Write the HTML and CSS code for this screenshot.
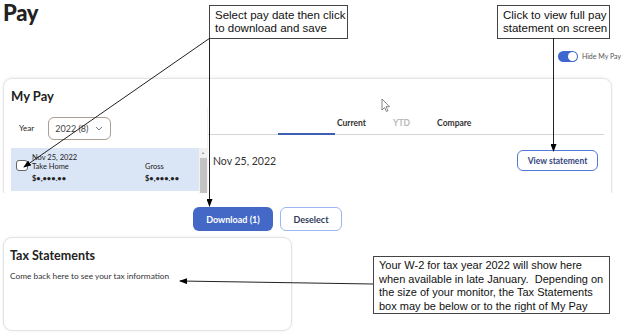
FILE: index.html
```html
<!DOCTYPE html>
<html lang="en">
<head>
  <meta charset="UTF-8">
  <meta name="viewport" content="width=device-width, initial-scale=1.0">
  <title>Pay</title>
  <link rel="stylesheet" href="styles.css">
</head>
<body>
  <div class="page">
    <h1 class="page-title">Pay</h1>

    <div class="toggle-row">
      <span class="toggle"><span class="knob"></span></span>
      <span class="toggle-label">Hide My Pay</span>
    </div>

    <div class="card mypay">
      <h2 class="card-title">My Pay</h2>
      <div class="mypay-body">
        <div class="left-col">
          <div class="year-row">
            <span class="year-label">Year</span>
            <div class="select">
              <span>2022 (8)</span>
              <svg width="8" height="5" viewBox="0 0 8 5"><path d="M1 1l3 3 3-3" fill="none" stroke="#777" stroke-width="1"/></svg>
            </div>
          </div>
          <div class="list">
            <div class="pay-item">
              <span class="checkbox"></span>
              <div class="pay-info">
                <div class="pay-date">Nov 25, 2022</div>
                <div class="pay-grid">
                  <span>Take Home</span><span>Gross</span>
                  <b>$•,•••.••</b><b>$•,•••.••</b>
                </div>
              </div>
            </div>
            <div class="scrollbar"><span class="arrow">▲</span><span class="thumb"></span></div>
          </div>
        </div>
        <div class="right-col">
          <div class="tabs">
            <span class="indicator"></span>
            <span class="tab active">Current</span>
            <span class="tab muted">YTD</span>
            <span class="tab">Compare</span>
          </div>
          <div class="statement-row">
            <span class="statement-date">Nov 25, 2022</span>
            <button class="btn outline">View statement</button>
          </div>
        </div>
      </div>
    </div>

    <div class="actions">
      <button class="btn primary">Download (1)</button>
      <button class="btn light">Deselect</button>
    </div>

    <div class="card tax">
      <h2 class="tax-title">Tax Statements</h2>
      <p class="tax-text">Come back here to see your tax information</p>
    </div>
  </div>

  <!-- annotations -->
  <div class="note note-select">Select pay date then click<br>to download and save</div>
  <div class="note note-view">Click to view full pay<br>statement on screen</div>
  <div class="note note-w2">Your W-2 for tax year 2022 will show here<br>when available in late January.&nbsp; Depending on<br>the size of your monitor, the Tax Statements<br>box may be below or to the right of My Pay</div>

  <svg class="arrows" width="624" height="336" viewBox="0 0 624 336">
    <defs>
      <marker id="head" markerWidth="8" markerHeight="6" refX="7" refY="3" orient="auto" markerUnits="userSpaceOnUse">
        <path d="M0 0L8 3L0 6z" fill="#000"/>
      </marker>
    </defs>
    <g stroke="#222" stroke-width="1" fill="none">
      <path d="M210 38L24 167" marker-end="url(#head)"/>
      <path d="M209.5 38V206" marker-end="url(#head)"/>
      <path d="M553.5 38V151" marker-end="url(#head)"/>
      <path d="M373 284L180 281" marker-end="url(#head)"/>
    </g>
    <path d="M382 99v11l2.5-2.5 2 4 1.5-.8-2-4h3.5z" fill="#fff" stroke="#666" stroke-width=".8"/>
  </svg>
</body>
</html>
```

FILE: styles.css
```css
body {
  margin: 0;
  background: #fff;
  font-family: Lato, "Open Sans", sans-serif;
  color: #222;
  width: 624px;
  height: 336px;
  position: relative;
  overflow: hidden;
}

.page {
  padding-left: 3px;
}

.page-title {
  margin: 0;
  padding-top: 2px;
  font-size: 22px;
  font-weight: 900;
  line-height: 22px;
  height: 24px;
  letter-spacing: -0.3px;
}

.toggle-row {
  display: flex;
  justify-content: flex-end;
  align-items: center;
  gap: 4px;
  margin-top: 24px;
  height: 12px;
  padding-right: 3px;
}

.toggle {
  width: 20px;
  height: 11px;
  border-radius: 6px;
  background: #3d66cf;
  display: flex;
  justify-content: flex-end;
  align-items: center;
  padding: 0 1px;
  box-sizing: border-box;
}

.knob {
  width: 9px;
  height: 9px;
  border-radius: 50%;
  background: #fff;
}

.toggle-label {
  font-size: 7px;
  color: #555;
}

.card {
  background: #fff;
  border: 1px solid #e4e4e4;
  box-shadow: 0 0 3px rgba(0, 0, 0, 0.08);
  box-sizing: border-box;
}

.mypay {
  margin-top: 16px;
  width: 609px;
  height: 115px;
  border-radius: 9px 9px 0 0;
  border-bottom: none;
  box-shadow: 0 -1px 3px rgba(0, 0, 0, 0.06);
}

.card-title {
  margin: 0;
  height: 29px;
  padding: 9px 0 0 7px;
  box-sizing: border-box;
  font-size: 13px;
  font-weight: 700;
}

.mypay-body {
  display: grid;
  grid-template-columns: 203px 1fr;
}

.left-col {
  padding-top: 8px;
}

.year-row {
  display: flex;
  align-items: center;
  height: 24px;
  padding-left: 15px;
  gap: 14px;
}

.year-label {
  font-size: 8px;
}

.select {
  width: 63px;
  height: 23px;
  border: 1px solid #a89e93;
  border-radius: 6px;
  box-sizing: border-box;
  display: flex;
  align-items: center;
  justify-content: space-between;
  padding: 0 7px 0 6px;
  font-size: 9px;
  color: #444;
}

.list {
  display: flex;
  margin-top: 8px;
  padding-left: 7px;
  height: 45px;
}

.pay-item {
  width: 188px;
  height: 43px;
  background: #dae5f6;
  display: flex;
  align-items: flex-start;
  padding: 5px 0 0 5px;
  box-sizing: border-box;
  gap: 4px;
}

.checkbox {
  width: 12px;
  height: 11px;
  margin-top: 7px;
  border: 1px solid #666;
  border-radius: 3px;
  background: #fff;
  box-sizing: border-box;
}

.pay-date {
  font-size: 7.5px;
  line-height: 9px;
}

.pay-grid {
  display: grid;
  grid-template-columns: 113px 1fr;
  font-size: 7.5px;
  line-height: 9px;
  row-gap: 3px;
}

.pay-grid b {
  font-size: 7.5px;
}

.scrollbar {
  width: 8px;
  height: 45px;
  background: #f1f1f1;
  display: flex;
  flex-direction: column;
  align-items: center;
}

.arrow {
  font-size: 4px;
  color: #999;
  line-height: 10px;
}

.thumb {
  width: 7px;
  flex: 1;
  background: #c3c3c3;
}

.right-col {
  border-left: 1px solid #f3f3f3;
}

.tabs {
  position: relative;
  display: flex;
  gap: 27px;
  height: 27px;
  align-items: center;
  padding: 3px 0 0 129px;
  box-sizing: border-box;
  margin-right: 7px;
  border-bottom: 1px solid #d6d6d6;
  font-size: 8.5px;
  font-weight: 700;
}

.indicator {
  position: absolute;
  left: 70px;
  bottom: -1px;
  width: 57px;
  height: 2px;
  background: #3f5fb5;
}

.tab {
  color: #333;
}

.tab.muted {
  color: #b8b8b8;
}

.statement-row {
  display: flex;
  align-items: center;
  justify-content: space-between;
  margin-top: 15px;
  padding: 0 13px 0 5px;
}

.statement-date {
  font-size: 10.5px;
  color: #333;
}

.btn {
  font-family: Lato, "Open Sans", sans-serif;
  font-weight: 700;
  border-radius: 6px;
  box-sizing: border-box;
  padding: 0;
  cursor: pointer;
}

.btn.outline {
  width: 81px;
  height: 21px;
  background: #fff;
  border: 1.5px solid #5577d4;
  color: #344680;
  font-size: 8.5px;
}

.actions {
  display: flex;
  gap: 7px;
  margin-top: 14px;
  padding-left: 190px;
}

.btn.primary {
  width: 80px;
  height: 24px;
  background: #4468c6;
  border: none;
  color: #fff;
  font-size: 9px;
}

.btn.light {
  width: 62px;
  height: 24px;
  background: #fff;
  border: 1.5px solid #9db6ee;
  color: #2f3a5c;
  font-size: 9px;
}

.tax {
  margin-top: 6px;
  width: 289px;
  height: 94px;
  border-radius: 9px;
  padding: 10px 6px;
}

.tax-title {
  margin: 0;
  font-size: 12.5px;
  font-weight: 700;
}

.tax-text {
  margin: 8px 0 0;
  font-size: 8.3px;
  color: #333;
}

.note {
  position: absolute;
  background: #fff;
  border: 1px solid #444;
  font-family: "Liberation Sans", Arial, sans-serif;
  color: #111;
  box-sizing: border-box;
  z-index: 2;
}

.note-select {
  left: 209px;
  top: 5px;
  width: 139px;
  height: 34px;
  font-size: 11.5px;
  line-height: 13px;
  padding: 3px 0 0 5px;
}

.note-view {
  left: 497px;
  top: 5px;
  width: 113px;
  height: 34px;
  font-size: 11.5px;
  line-height: 13px;
  padding: 3px 0 0 5px;
}

.note-w2 {
  left: 373px;
  top: 256px;
  width: 237px;
  height: 58px;
  font-size: 11px;
  line-height: 13.5px;
  padding: 2px 0 0 5px;
}

.arrows {
  position: absolute;
  left: 0;
  top: 0;
  z-index: 3;
  pointer-events: none;
}
```
